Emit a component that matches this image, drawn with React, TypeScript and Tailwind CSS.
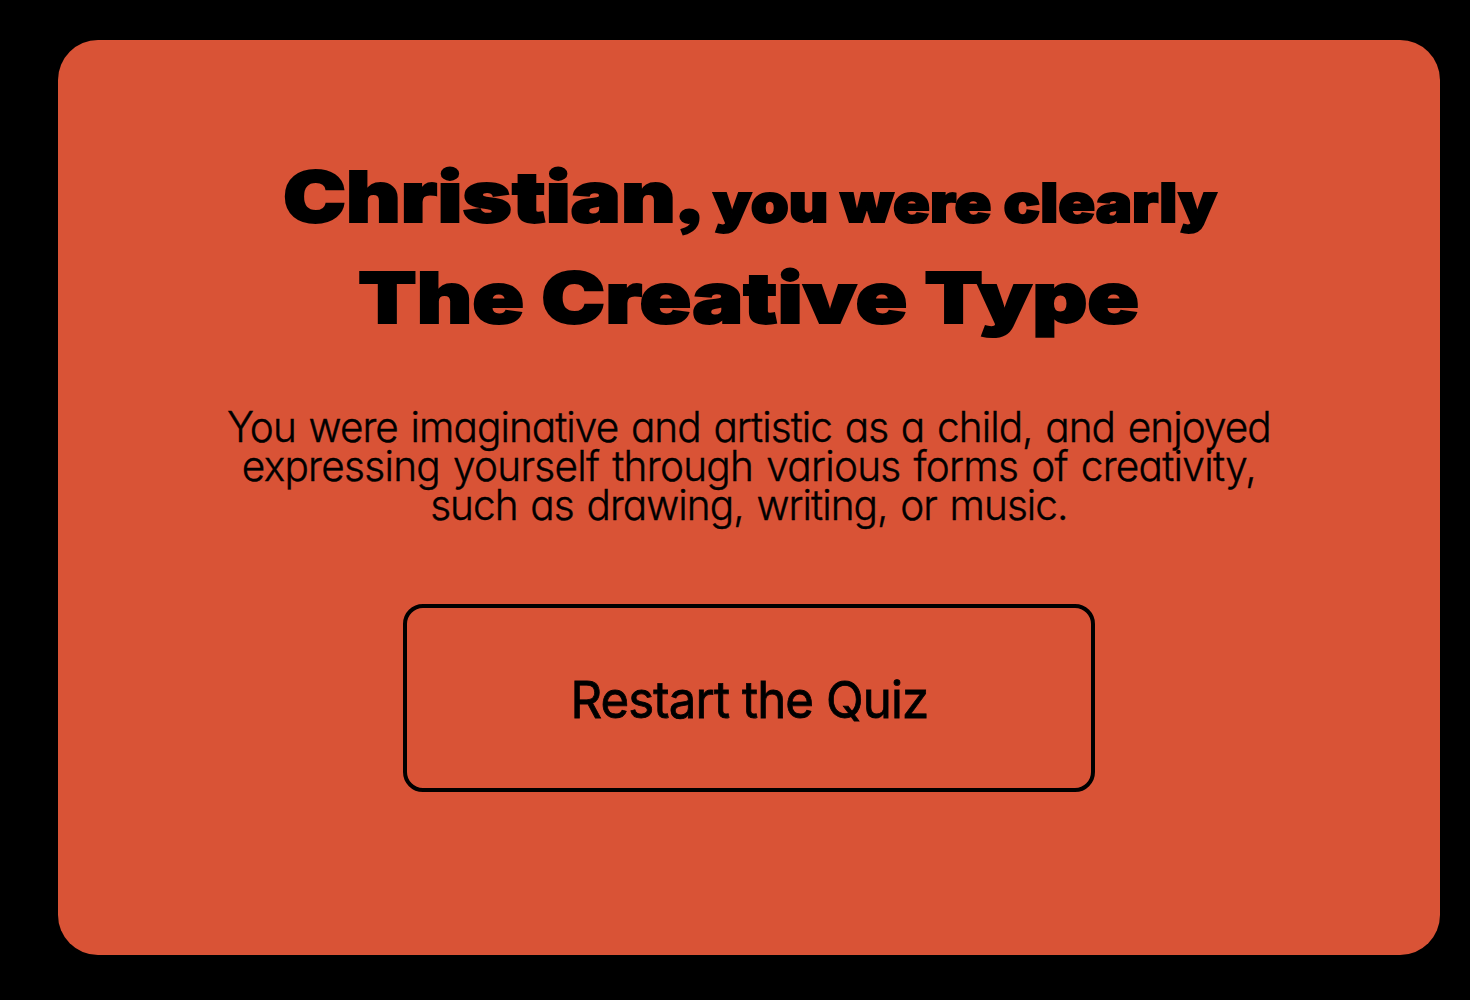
export default function App() {
  return (
    <main className="flex h-[1000px] w-[1470px] bg-black pt-10 pl-[58px] text-black">
      <section className="flex h-[915px] w-[1382px] flex-col items-center rounded-[40px] bg-[#d95336] pt-[106px]">
        <h1 className="flex flex-col items-center font-black [-webkit-text-stroke:1.8px_black] [font-family:Inter,sans-serif] [font-feature-settings:'ss03']">
          <span className="flex h-[101px] items-baseline gap-4 whitespace-nowrap leading-[101px]">
            <span className="w-[414px] origin-left scale-x-[1.205] text-[70px]">Christian,</span>
            <span className="w-[503px] origin-left scale-x-[1.148] text-[53px]">you were clearly</span>
          </span>
          <span className="flex h-[101px] scale-x-[1.222] text-[70px] leading-[101px] whitespace-nowrap">The Creative Type</span>
        </h1>
        <p className="mt-[59px] flex scale-x-[0.965] flex-col items-center text-[42px] leading-[39px] font-light tracking-[-1px] whitespace-nowrap [word-spacing:2.4px] [font-family:Inter,sans-serif] [-webkit-text-stroke:0.4px_black] [font-feature-settings:'cv11']">
          <span>You were imaginative and artistic as a child, and enjoyed</span>
          <span className="tracking-[-0.75px]">expressing yourself through various forms of creativity,</span>
          <span>such as drawing, writing, or music.</span>
        </p>
        <button className="mt-[80px] flex h-[188px] w-[692px] items-center justify-center rounded-[20px] border-4 border-black pt-1 text-[51px] [font-family:Inter,sans-serif] [-webkit-text-stroke:0.8px_black]">
          <span className="scale-x-[0.965] tracking-[-0.95px]">Restart the Quiz</span>
        </button>
      </section>
    </main>
  );
}
